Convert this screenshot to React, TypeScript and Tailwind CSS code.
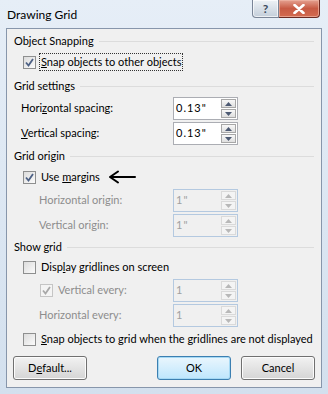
import React from "react"

const font = { fontFamily: 'Lato, "Liberation Sans", sans-serif' }

function Check({ checked, disabled }: { checked?: boolean; disabled?: boolean }) {
  return (
    <div
      className={`w-[13px] h-[13px] border flex items-center justify-center shrink-0 ${
        disabled ? "border-[#c5c5c5] bg-[#f4f4f4]" : "border-[#8e8f8f] bg-gradient-to-br from-[#dcdcdc] to-[#fbfbfb]"
      }`}
    >
      {checked && (
        <svg width="9" height="9" viewBox="0 0 9 9">
          <path
            d="M1 4.5 L3.5 7.5 L8 1"
            fill="none"
            stroke={disabled ? "#a8a8a8" : "#4d6185"}
            strokeWidth="1.8"
          />
        </svg>
      )}
    </div>
  )
}

function GroupHeader({ title }: { title: string }) {
  return (
    <div className="h-4 flex items-center pl-[7px] pr-[7px] gap-[5px]">
      <span className="whitespace-nowrap">{title}</span>
      <div className="flex-1 h-px bg-[#dcdcdc]" />
    </div>
  )
}

function Spinner({ value, disabled }: { value: string; disabled?: boolean }) {
  return (
    <div
      className={`w-[65px] h-[23px] border flex items-stretch ${
        disabled ? "border-[#b4c9e0] bg-[#f0f0f0] text-[#a0a0a0]" : "border-[#abadb3] bg-white"
      }`}
    >
      <div className="flex-1 flex items-center pl-[2px] tracking-[1px]">{value}</div>
      <div className="w-[16px] flex flex-col py-[1px] pr-[1px] gap-[1px]">
        <div
          className={`flex-1 border flex items-center justify-center ${
            disabled ? "border-[#dadada] bg-[#f4f4f4]" : "border-[#a7a7a7] bg-gradient-to-b from-[#f8f8f8] to-[#dfdfdf]"
          }`}
        >
          <svg width="7" height="4" viewBox="0 0 7 4">
            <path d="M0 4 L3.5 0 L7 4 Z" fill={disabled ? "#b8b8b8" : "#4d5a73"} />
          </svg>
        </div>
        <div
          className={`flex-1 border flex items-center justify-center ${
            disabled ? "border-[#dadada] bg-[#f4f4f4]" : "border-[#a7a7a7] bg-gradient-to-b from-[#f8f8f8] to-[#dfdfdf]"
          }`}
        >
          <svg width="7" height="4" viewBox="0 0 7 4">
            <path d="M0 0 L3.5 4 L7 0 Z" fill={disabled ? "#b8b8b8" : "#4d5a73"} />
          </svg>
        </div>
      </div>
    </div>
  )
}

function SpinRow({
  label,
  value,
  disabled,
  indent,
  children,
}: {
  label: React.ReactNode
  value: string
  disabled?: boolean
  indent: string
  children?: React.ReactNode
}) {
  return (
    <div className={`flex items-center h-[23px] ${indent}`}>
      {children}
      <span className={`flex-1 ${disabled ? "text-[#8d8d8d]" : ""}`}>{label}</span>
      <div className="mr-[83px]">
        <Spinner value={value} disabled={disabled} />
      </div>
    </div>
  )
}

function Btn({ children, focused }: { children: React.ReactNode; focused?: boolean }) {
  return (
    <div
      className={`w-[74px] h-[24px] rounded-[3px] border flex items-center justify-center ${
        focused
          ? "border-[#3c7fb1] bg-gradient-to-b from-[#eaf6fd] to-[#bee6fd] shadow-[inset_0_0_0_1px_#a6d9f4]"
          : "border-[#707070] bg-gradient-to-b from-[#f2f2f2] to-[#d5d5d5] shadow-[inset_0_0_0_1px_#fcfcfc]"
      }`}
    >
      {children}
    </div>
  )
}

export default function App() {
  return (
    <div
      className="w-[328px] h-[394px] bg-gradient-to-b from-[#e6eef7] to-[#d3e0ee] flex flex-col text-[11px] text-black overflow-hidden"
      style={font}
    >
      {/* title bar */}
      <div className="h-[28px] flex items-start shrink-0">
        <div className="pl-[7px] pt-[6px] flex-1 text-[12px]">Drawing Grid</div>
        <div className="flex mr-[8px]">
          <div className="w-[27px] h-[18px] border border-[#7a8597] border-t-0 rounded-bl-[4px] bg-gradient-to-b from-[#eef2f6] to-[#c3ceda] flex items-center justify-center text-[#3c4a5e] font-bold text-[12px] shadow-[inset_0_0_0_1px_#ffffffaa]">
            ?
          </div>
          <div className="w-[41px] h-[18px] border border-[#6b2a22] border-t-0 border-l-0 rounded-br-[4px] bg-gradient-to-b from-[#e4a191] via-[#c75a44] to-[#d36b50] flex items-center justify-center shadow-[inset_0_0_0_1px_#f0b8a8aa]">
            <svg width="12" height="10" viewBox="0 0 12 10">
              <path d="M1.5 1 L10.5 9 M10.5 1 L1.5 9" stroke="#ffffff" strokeWidth="2.6" strokeLinecap="round" />
            </svg>
          </div>
        </div>
      </div>

      {/* client area */}
      <div className="mx-[6px] h-[360px] border border-[#8796ab] bg-[#f0f0f0] flex flex-col pt-[4px]">
        <GroupHeader title="Object Snapping" />
        <div className="flex items-center h-[18px] mt-[4px] pl-[16px]">
          <Check checked />
          <span className="ml-[3px] px-[1px] border border-dotted border-[#333]">
            <u>S</u>nap objects to other objects
          </span>
        </div>

        <div className="mt-[7px]">
          <GroupHeader title="Grid settings" />
        </div>
        <div className="mt-[3px] flex flex-col gap-[2px]">
          <SpinRow label={<>Hori<u>z</u>ontal spacing:</>} value={'0.13"'} indent="pl-[14px]" />
          <SpinRow label={<><u>V</u>ertical spacing:</>} value={'0.13"'} indent="pl-[14px]" />
        </div>

        <div className="mt-[3px]">
          <GroupHeader title="Grid origin" />
        </div>
        <div className="flex items-center h-[18px] mt-[4px] pl-[16px]">
          <Check checked />
          <span className="ml-[5px]">
            Use <u>m</u>argins
          </span>
          <svg width="28" height="14" viewBox="0 0 28 14" className="ml-[8px]">
            <path d="M27 7 L2 7 M10 1.5 L2 7 L10 12.5" fill="none" stroke="#000" strokeWidth="2" strokeLinecap="round" strokeLinejoin="round" />
          </svg>
        </div>
        <div className="mt-[3px] flex flex-col gap-[2px]">
          <SpinRow label="Horizontal origin:" value={'1"'} disabled indent="pl-[32px]" />
          <SpinRow label="Vertical origin:" value={'1"'} disabled indent="pl-[32px]" />
        </div>

        <div className="mt-[2px]">
          <GroupHeader title="Show grid" />
        </div>
        <div className="flex items-center h-[18px] mt-[3px] pl-[16px]">
          <Check />
          <span className="ml-[5px]">
            Disp<u>l</u>ay gridlines on screen
          </span>
        </div>
        <div className="mt-[3px] flex flex-col gap-[2px]">
          <SpinRow label="Vertical every:" value="1" disabled indent="pl-[33px]">
            <div className="mr-[5px]">
              <Check checked disabled />
            </div>
          </SpinRow>
          <SpinRow label="Horizontal every:" value="1" disabled indent="pl-[32px]" />
        </div>
        <div className="flex items-center h-[18px] mt-[3px] pl-[16px]">
          <Check />
          <span className="ml-[5px] whitespace-nowrap">
            <u>S</u>nap objects to grid when the gridlines are not displayed
          </span>
        </div>

        <div className="flex mt-[8px] px-[6px]">
          <Btn>
            <span>
              D<u>e</u>fault...
            </span>
          </Btn>
          <div className="flex-1" />
          <Btn focused>OK</Btn>
          <div className="w-[10px]" />
          <Btn>Cancel</Btn>
        </div>
      </div>
    </div>
  )
}
